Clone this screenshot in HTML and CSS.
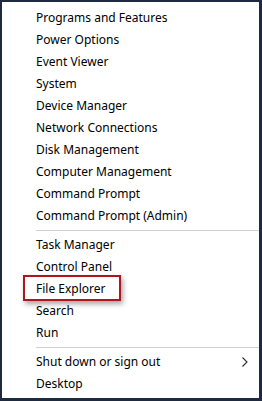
FILE: index.html
```html
<!DOCTYPE html>
<html>
<head>
<meta charset="utf-8">
<link rel="stylesheet" href="styles.css">
</head>
<body>
<div class="menu">
  <ul class="group">
    <li class="item">Programs and Features</li>
    <li class="item">Power Options</li>
    <li class="item">Event Viewer</li>
    <li class="item">System</li>
    <li class="item">Device Manager</li>
    <li class="item">Network Connections</li>
    <li class="item">Disk Management</li>
    <li class="item">Computer Management</li>
    <li class="item">Command Prompt</li>
    <li class="item">Command Prompt (Admin)</li>
  </ul>
  <div class="sep"></div>
  <ul class="group">
    <li class="item">Task Manager</li>
    <li class="item">Control Panel</li>
    <li class="item highlight">File Explorer<span class="mark"></span></li>
    <li class="item">Search</li>
    <li class="item">Run</li>
  </ul>
  <div class="sep"></div>
  <ul class="group">
    <li class="item sub">Shut down or sign out
      <svg class="chev" width="6" height="10" viewBox="0 0 6 10"><path d="M0.5 0.5 L5 5 L0.5 9.5" fill="none" stroke="#2a2a3a" stroke-width="1.1"/></svg>
    </li>
    <li class="item">Desktop</li>
  </ul>
</div>
</body>
</html>
```
FILE: styles.css
```css
html, body {
  margin: 0;
  padding: 0;
  background: #ffffff;
}
.menu {
  box-sizing: border-box;
  width: 262px;
  height: 401px;
  border: 2px solid #1d2a3f;
  border-right-width: 3px;
  border-bottom-width: 3px;
  background: #ffffff;
  padding: 5px 0 0 0;
  font-family: "Noto Sans", "Open Sans", sans-serif;
  font-size: 12px;
  color: #000000;
}
.group {
  list-style: none;
  margin: 0;
  padding: 0;
}
.item {
  position: relative;
  height: 22px;
  line-height: 22px;
  padding-left: 34px;
  white-space: nowrap;
  display: flex;
  align-items: center;
}
.sub {
  justify-content: space-between;
  padding-right: 11px;
}
.chev {
  display: block;
}
.sep {
  height: 1px;
  background: #d0d0d0;
  margin: 3px 0 3px 34px;
}
.mark {
  position: absolute;
  left: 21px;
  top: -3px;
  width: 94px;
  height: 22px;
  border: 2px solid #b0141c;
  box-shadow: 2px 3px 5px rgba(0,0,0,0.35);
}
```
